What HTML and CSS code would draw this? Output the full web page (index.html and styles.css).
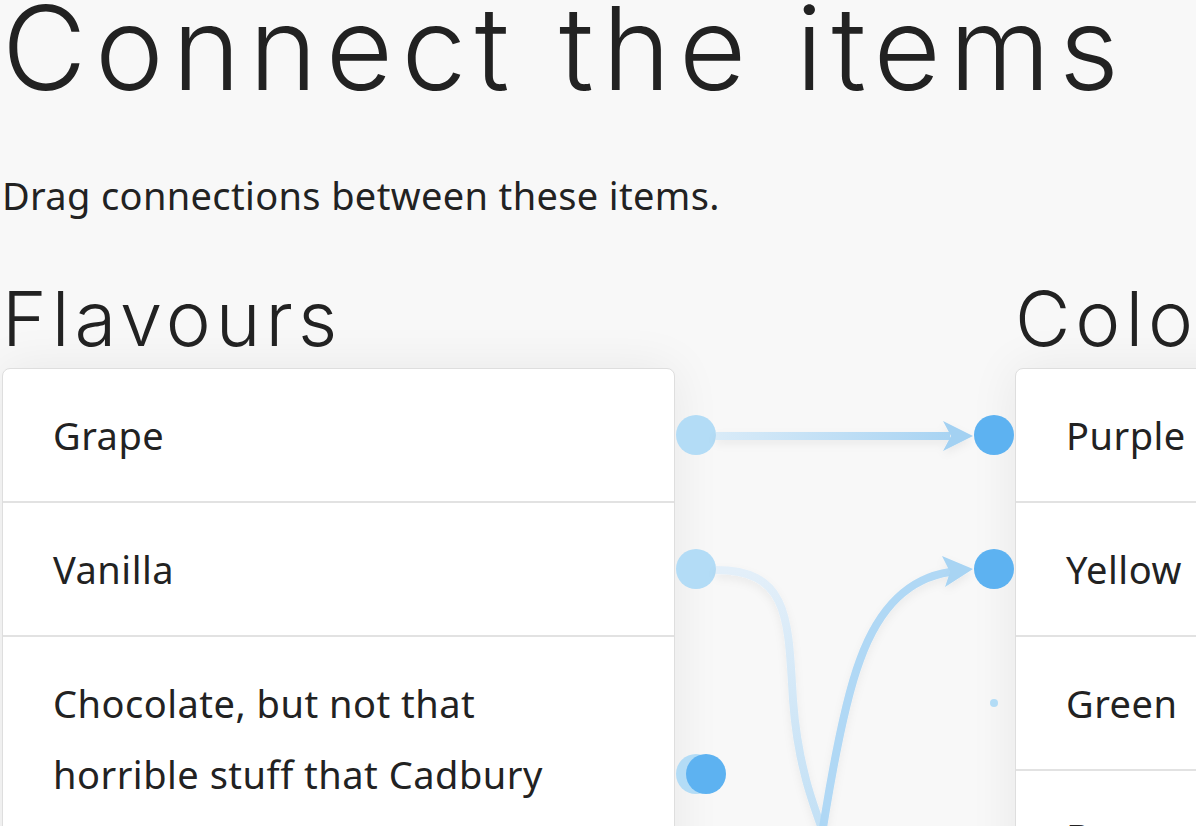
FILE: index.html
```html
<!DOCTYPE html>
<html lang="en">
<head>
<meta charset="utf-8">
<title>Connect the items</title>
<link rel="stylesheet" href="styles.css">
</head>
<body>
<main class="page">
  <h1 class="title">Connect the items</h1>
  <p class="lead">Drag connections between these items.</p>
  <div class="board">
    <section class="column">
      <h2 class="column-title">Flavours</h2>
      <ul class="list list-left">
        <li class="item"><span class="text">Grape</span><span class="handle handle-soft"></span></li>
        <li class="item"><span class="text">Vanilla</span><span class="handle handle-soft"></span></li>
        <li class="item"><span class="text">Chocolate, but not that<br>horrible stuff that Cadbury<br>makes</span><span class="handle handle-soft"></span><span class="handle handle-drag"></span></li>
        <li class="item"><span class="text">Strawberry</span><span class="handle handle-soft"></span></li>
      </ul>
    </section>
    <div class="gutter"></div>
    <section class="column">
      <h2 class="column-title">Colours</h2>
      <ul class="list list-right">
        <li class="item"><span class="text">Purple</span><span class="handle handle-solid"></span></li>
        <li class="item"><span class="text">Yellow</span><span class="handle handle-solid"></span></li>
        <li class="item"><span class="text">Green</span><span class="handle handle-tiny"></span></li>
        <li class="item"><span class="text">Brown</span><span class="handle handle-tiny"></span></li>
      </ul>
    </section>
  </div>
  <svg class="links" width="1196" height="826" viewBox="0 0 1196 826" aria-hidden="true">
    <defs>
      <linearGradient id="g1" gradientUnits="userSpaceOnUse" x1="716" y1="0" x2="975" y2="0">
        <stop offset="0" stop-color="#d9ebf8"/>
        <stop offset="1" stop-color="#a3d1f2"/>
      </linearGradient>
      <linearGradient id="g2" gradientUnits="userSpaceOnUse" x1="0" y1="570" x2="0" y2="830">
        <stop offset="0" stop-color="#e3eff9"/>
        <stop offset="1" stop-color="#c2e0f5"/>
      </linearGradient>
      <filter id="sh" x="-20%" y="-50%" width="140%" height="200%">
        <feDropShadow dx="0" dy="4" stdDeviation="4" flood-color="#000" flood-opacity="0.06"/>
      </filter>
    </defs>
    <g filter="url(#sh)">
      <path d="M716,436 L950,436" stroke="url(#g1)" stroke-width="8" fill="none"/>
      <path d="M943,421 L973,436 L943,451 L951,436 Z" fill="#a3d1f2"/>
      <path d="M716,570 C790,570 788,620 793,700 C798,770 815,810 832,856" stroke="url(#g2)" stroke-width="8" fill="none"/>
      <path d="M818,860 C830,780 845,700 860,660 C880,605 910,578 950,572" stroke="#acd6f4" stroke-width="8" fill="none" stroke-opacity="0.95"/>
      <path d="M942,556 L973,569 L945,587 L950,572 Z" fill="#a8d4f3"/>
    </g>
  </svg>
</main>
</body>
</html>
```
FILE: styles.css
```css
html, body {
  margin: 0;
  padding: 0;
  background: #f8f8f8;
  overflow: hidden;
}

body {
  width: 1196px;
  height: 826px;
  color: #222;
  font-family: "Noto Sans", "Open Sans", sans-serif;
}

.page {
  position: relative;
  padding: 0 0 0 2px;
}

.title {
  margin: 0;
  font-family: "Inter", "Noto Sans", sans-serif;
  font-weight: 300;
  font-size: 116px;
  line-height: 96px;
  letter-spacing: 8.5px;
  white-space: nowrap;
}

.lead {
  margin: 74px 0 0;
  font-size: 38px;
  line-height: 50px;
  letter-spacing: 0.35px;
}

.board {
  display: grid;
  grid-template-columns: 673px 340px 673px;
  margin-top: 56px;
}

.column-title {
  margin: 0 0 8px;
  font-family: "Inter", "Noto Sans", sans-serif;
  font-weight: 300;
  font-size: 76px;
  line-height: 84px;
  letter-spacing: 5px;
  white-space: nowrap;
}

.list {
  list-style: none;
  margin: 0;
  padding: 0;
  background: #fff;
  border: 1px solid #dedede;
  border-radius: 8px;
  box-shadow: 0 0 50px rgba(0, 0, 0, 0.07);
}

.item {
  position: relative;
  padding: 31px 50px 30px;
  font-size: 38px;
  line-height: 71px;
  letter-spacing: 0.5px;
  white-space: nowrap;
}

.item + .item {
  border-top: 2px solid #e2e2e2;
}

.handle {
  position: absolute;
  top: 50%;
  width: 40px;
  height: 40px;
  margin-top: -20px;
  border-radius: 50%;
}

.list-left .handle {
  left: calc(100% + 2px);
}

.list-right .handle {
  right: calc(100% + 2px);
}

.handle-soft {
  background: #b3dcf6;
}

.handle-solid {
  background: #5db2f1;
}

.list-left .handle-drag {
  left: calc(100% + 12px);
  background: #5db2f1;
}

.list-right .handle-tiny {
  width: 8px;
  height: 8px;
  margin-top: -4px;
  right: calc(100% + 18px);
  background: #b3dcf6;
}

.links {
  position: absolute;
  left: 0;
  top: 0;
  pointer-events: none;
}
```
